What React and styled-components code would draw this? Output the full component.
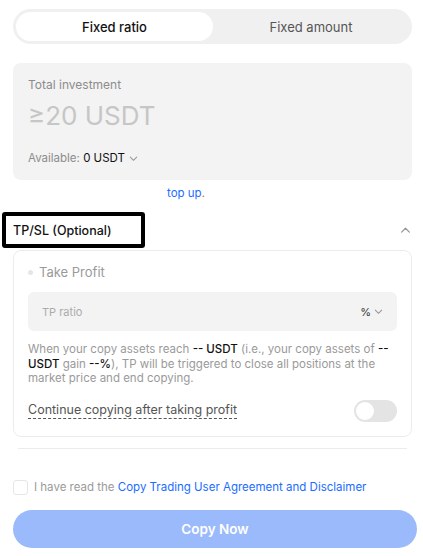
import React, { useState } from 'react';
import styled, { createGlobalStyle } from 'styled-components';

const GlobalStyle = createGlobalStyle`
  body {
    margin: 0;
    background: #fff;
    font-family: Inter, "Noto Sans", sans-serif;
  }
`;

const Page = styled.div`
  width: 423px;
  padding: 9px 6px 0 13px;
  box-sizing: border-box;
`;

const ModeSwitch = styled.div`
  width: 399px;
  height: 35px;
  box-sizing: border-box;
  padding: 3px;
  background: #f0f0f0;
  border-radius: 18px;
  display: grid;
  grid-template-columns: 197px 1fr;
`;

const ModeTab = styled.div`
  display: flex;
  align-items: center;
  justify-content: center;
  border-radius: 15px;
  font-size: 13px;
  font-weight: ${p => (p.$active ? 500 : 400)};
  color: ${p => (p.$active ? '#121212' : '#555')};
  background: ${p => (p.$active ? '#fff' : 'transparent')};
`;

const InvestBox = styled.div`
  width: 399px;
  height: 117px;
  box-sizing: border-box;
  margin-top: 19px;
  padding: 14px 15px;
  background: #f3f3f3;
  border-radius: 8px;
  display: flex;
  flex-direction: column;
`;

const Label = styled.div`
  font-size: 12px;
  color: #8c8c8c;
  line-height: 15px;
`;

const Amount = styled.div`
  margin-top: 8px;
  font-size: 26px;
  line-height: 32px;
  color: #c6c6c6;
`;

const Available = styled.div`
  margin-top: 19px;
  font-size: 11.5px;
  color: #8c8c8c;
  display: flex;
  align-items: center;
  gap: 4px;
  b {
    font-weight: 400;
    color: #121212;
  }
`;

const TopUp = styled.div`
  margin-top: 6px;
  padding-left: 154px;
  font-size: 11.5px;
  line-height: 14px;
  color: #1a6dff;
  span {
    color: #f04a4a;
  }
`;

const SectionHead = styled.div`
  margin-top: 12px;
  margin-left: -11px;
  display: flex;
  align-items: center;
  justify-content: space-between;
  width: 409px;
`;

const HeadTitle = styled.div`
  width: 143px;
  height: 36px;
  box-sizing: border-box;
  border: 4px solid #000;
  border-radius: 3px;
  padding-left: 7px;
  display: flex;
  align-items: center;
  font-size: 12.5px;
  font-weight: 500;
  color: #121212;
`;

const Card = styled.div`
  width: 399px;
  box-sizing: border-box;
  margin-top: 2px;
  border: 1px solid #ececec;
  border-radius: 8px;
  padding: 12px 14px 14px;
`;

const CardTitle = styled.div`
  display: flex;
  align-items: center;
  gap: 6px;
  font-size: 13px;
  color: #9a9a9a;
  line-height: 18px;
  &::before {
    content: '';
    width: 5px;
    height: 5px;
    border-radius: 50%;
    background: #e6e6e6;
  }
`;

const InputBox = styled.div`
  margin-top: 11px;
  height: 39px;
  border-radius: 6px;
  background: #f3f3f3;
  display: flex;
  align-items: center;
  justify-content: space-between;
  padding: 0 14px;
`;

const Placeholder = styled.span`
  font-size: 11px;
  color: #ababab;
`;

const Unit = styled.span`
  display: flex;
  align-items: center;
  gap: 3px;
  font-size: 11px;
  color: #333;
`;

const Note = styled.p`
  margin: 11px 0 0;
  font-size: 11.5px;
  line-height: 14.5px;
  color: #9a9a9a;
  b {
    font-weight: 500;
    color: #121212;
  }
`;

const Row = styled.div`
  margin-top: 14px;
  display: flex;
  align-items: center;
  justify-content: space-between;
`;

const Dotted = styled.span`
  font-size: 12.5px;
  color: #555;
  border-bottom: 1px dashed #555;
  line-height: 16px;
`;

const Switch = styled.div`
  width: 43px;
  height: 22px;
  border-radius: 11px;
  background: #e4e4e4;
  position: relative;
  &::after {
    content: '';
    position: absolute;
    left: 2px;
    top: 2px;
    width: 18px;
    height: 18px;
    border-radius: 50%;
    background: #fff;
  }
`;

const Divider = styled.div`
  margin: 11px 0 0 5px;
  width: 389px;
  height: 1px;
  background: #ececec;
`;

const Agree = styled.label`
  margin-top: 31px;
  display: flex;
  align-items: center;
  gap: 6px;
  font-size: 11.5px;
  color: #9a9a9a;
  a {
    color: #1a6dff;
    text-decoration: none;
  }
`;

const Check = styled.span`
  width: 13px;
  height: 13px;
  border: 1px solid #e6e6e6;
  border-radius: 3px;
`;

const CopyButton = styled.button`
  margin-top: 15px;
  width: 404px;
  height: 38px;
  border: none;
  border-radius: 19px;
  background: #9bbafb;
  color: #fff;
  font-family: inherit;
  font-size: 13.5px;
  font-weight: 600;
`;

const Chevron = ({ up, size = 10, color = '#999' }) => (
  <svg width={size} height={size} viewBox="0 0 10 10" fill="none">
    <path
      d={up ? 'M1.5 6.5 L5 3 L8.5 6.5' : 'M1.5 3.5 L5 7 L8.5 3.5'}
      stroke={color}
      strokeWidth="1.2"
      strokeLinecap="round"
      strokeLinejoin="round"
    />
  </svg>
);

export default function App() {
  const [mode, setMode] = useState('ratio');

  return (
    <Page>
      <GlobalStyle />
      <ModeSwitch>
        <ModeTab $active={mode === 'ratio'} onClick={() => setMode('ratio')}>Fixed ratio</ModeTab>
        <ModeTab $active={mode === 'amount'} onClick={() => setMode('amount')}>Fixed amount</ModeTab>
      </ModeSwitch>

      <InvestBox>
        <Label>Total investment</Label>
        <Amount>≥20 USDT</Amount>
        <Available>
          <span>Available: <b>0 USDT</b></span>
          <Chevron size={9} />
        </Available>
      </InvestBox>

      <TopUp>top up<span>.</span></TopUp>

      <SectionHead>
        <HeadTitle>TP/SL (Optional)</HeadTitle>
        <Chevron up size={11} />
      </SectionHead>

      <Card>
        <CardTitle>Take Profit</CardTitle>
        <InputBox>
          <Placeholder>TP ratio</Placeholder>
          <Unit>% <Chevron size={9} /></Unit>
        </InputBox>
        <Note>
          When your copy assets reach <b>-- USDT</b> (i.e., your copy assets of <b>-- USDT</b> gain <b>--%</b>), TP will be triggered to close all positions at the market price and end copying.
        </Note>
        <Row>
          <Dotted>Continue copying after taking profit</Dotted>
          <Switch />
        </Row>
      </Card>

      <Divider />

      <Agree>
        <Check />
        <span>I have read the <a href="#">Copy Trading User Agreement and Disclaimer</a></span>
      </Agree>

      <CopyButton>Copy Now</CopyButton>
    </Page>
  );
}
